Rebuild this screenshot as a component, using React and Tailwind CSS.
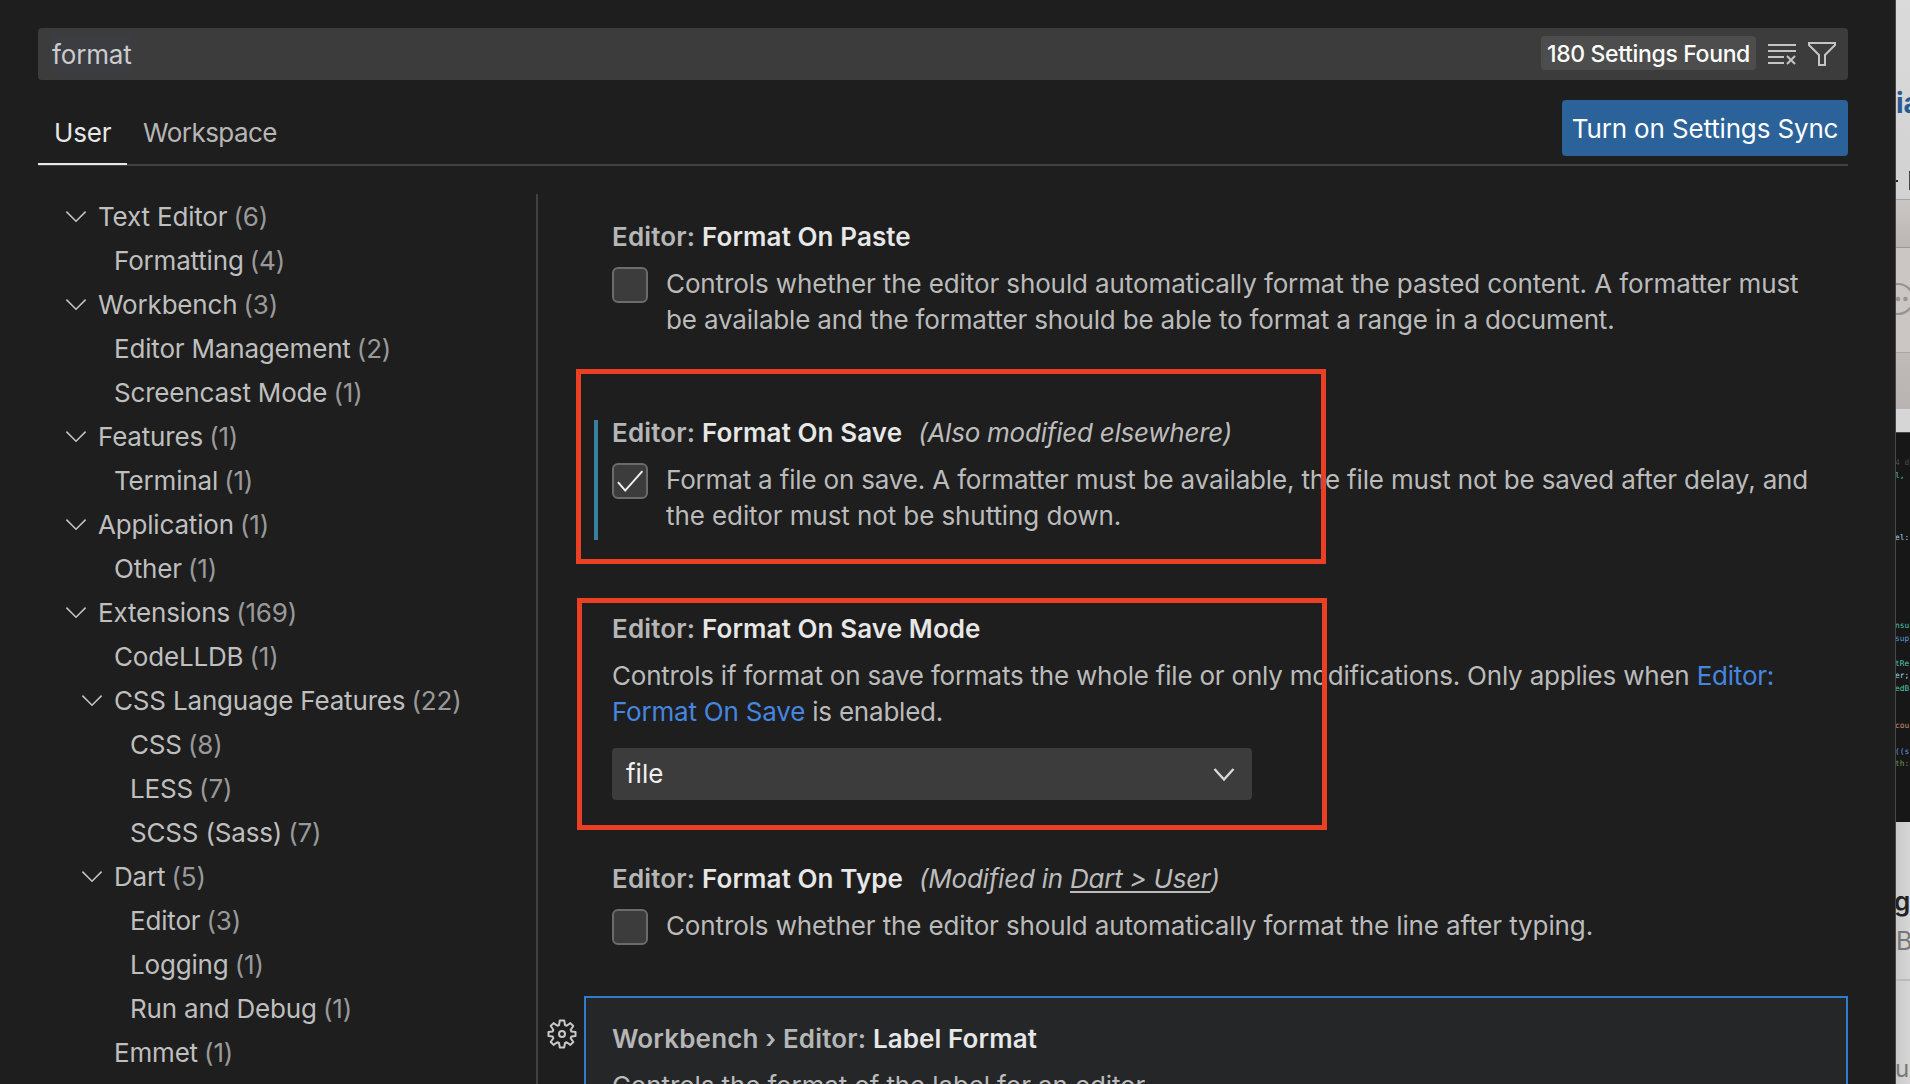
const TREE = [
  { label: "Text Editor", count: 6, depth: 0, open: true },
  { label: "Formatting", count: 4, depth: 1 },
  { label: "Workbench", count: 3, depth: 0, open: true },
  { label: "Editor Management", count: 2, depth: 1 },
  { label: "Screencast Mode", count: 1, depth: 1 },
  { label: "Features", count: 1, depth: 0, open: true },
  { label: "Terminal", count: 1, depth: 1 },
  { label: "Application", count: 1, depth: 0, open: true },
  { label: "Other", count: 1, depth: 1 },
  { label: "Extensions", count: 169, depth: 0, open: true },
  { label: "CodeLLDB", count: 1, depth: 1 },
  { label: "CSS Language Features", count: 22, depth: 1, open: true },
  { label: "CSS", count: 8, depth: 2 },
  { label: "LESS", count: 7, depth: 2 },
  { label: "SCSS (Sass)", count: 7, depth: 2 },
  { label: "Dart", count: 5, depth: 1, open: true },
  { label: "Editor", count: 3, depth: 2 },
  { label: "Logging", count: 1, depth: 2 },
  { label: "Run and Debug", count: 1, depth: 2 },
  { label: "Emmet", count: 1, depth: 1 },
];

const INDENT = ["pl-[28px]", "pl-[44px]", "pl-[60px]"];

const CODE = [
  ["4 d", "text-[#4a4a4a]"],
  ["l,", "text-[#4ec9b0]"],
  null, null, null, null,
  ["el:", "text-[#9cdcfe]"],
  null, null, null, null, null, null,
  ["nsu", "text-[#4ec9b0]"],
  ["sup", "text-[#569cd6]"],
  null,
  ["tRe", "text-[#4ec9b0]"],
  ["er;", "text-[#9cdcfe]"],
  ["edB", "text-[#4ec9b0]"],
  null, null,
  ["cou", "text-[#ce9178]"],
  null,
  ["((s", "text-[#6a9ce0]"],
  ["th:", "text-[#6a9955]"],
];

function Twistie() {
  return (
    <svg className="h-[32px] w-[32px] shrink-0" viewBox="0 0 32 32" fill="none" stroke="#c5c5c5" strokeWidth="1.5">
      <path d="M6.4 10.6 L16 20.2 L25.6 10.6" />
    </svg>
  );
}

function TreeRow({ label, count, depth, open }) {
  return (
    <div className={`flex h-[44px] items-center ${INDENT[depth]}`}>
      <div className="mr-[-1px] flex w-[33px] shrink-0 -translate-x-[6px]">{open && <Twistie />}</div>
      <span className="whitespace-pre tracking-[-0.18px] text-[#bfbfbf]">
        {label}
        <span className="-ml-px text-[#999999]"> ({count})</span>
      </span>
    </div>
  );
}

function Heading({ category, name, children }) {
  return (
    <h3 className="whitespace-pre leading-[36px]">
      <span className="font-semibold tracking-[0.16px] text-[#b6b6b6]">{category} </span>
      <span className="font-semibold tracking-[0.09px] text-[#e7e7e7]">{name}</span>
      {children}
    </h3>
  );
}

function Note({ children }) {
  return <span className="ml-4 italic tracking-[-0.24px] text-[#bcbcbc]">{children}</span>;
}

function Checkbox({ checked }) {
  return (
    <div className="mt-px h-[36px] w-[36px] shrink-0 rounded-[6px] border-2 border-[#6b6b6b] bg-[#3c3c3c]">
      {checked && (
        <svg className="h-[32px] w-[32px]" viewBox="0 0 32 32" fill="none" stroke="#f0f0f0" strokeWidth="2">
          <path d="M4 17.2 L11.2 25.6 L28.4 6.2" />
        </svg>
      )}
    </div>
  );
}

function CheckSetting({ checked, children }) {
  return (
    <div className="mt-[11px] flex">
      <Checkbox checked={checked} />
      <p className="ml-[18px] whitespace-nowrap leading-[36px]">{children}</p>
    </div>
  );
}

function ClearIcon() {
  return (
    <svg className="h-[24px] w-[30px]" viewBox="0 0 30 24" fill="none" stroke="#c5c5c5" strokeWidth="2">
      <path d="M1 3H29M1 9H29M1 15H17M1 21H17" />
      <path d="M20 14L28 22M28 14L20 22" />
    </svg>
  );
}

function FilterIcon() {
  return (
    <svg className="h-[26px] w-[30px]" viewBox="0 0 30 26" fill="none" stroke="#c5c5c5" strokeWidth="2">
      <path d="M2 2H28V4L18 14V24H12V14L2 4Z" />
    </svg>
  );
}

function GearIcon() {
  return (
    <svg className="h-[30px] w-[30px]" viewBox="0 0 30 30" fill="none" stroke="#c8c8c8" strokeWidth="2" strokeLinejoin="round">
      <path d="M12.8 1.5h4.4l.8 4.6 1.6.7 3.8-2.7 2.9 2.9-2.6 3.8.7 1.7 4.1.6v3.8l-4.1.6-.7 1.7 2.6 3.8-2.9 2.9-3.8-2.7-1.6.7-.8 4.6h-4.4l-.8-4.6-1.6-.7-3.8 2.7-2.9-2.9 2.6-3.8-.7-1.7-4.1-.6v-3.8l4.1-.6.7-1.7-2.6-3.8 2.9-2.9 3.8 2.7 1.6-.7z" />
      <circle cx="15" cy="15" r="3" />
    </svg>
  );
}

function BackgroundWindow() {
  return (
    <aside className="flex w-[14px] shrink-0 flex-col overflow-hidden bg-[#d6d6d6]">
      <div className="flex h-[199px] shrink-0 flex-col bg-gradient-to-b from-[#dadada] to-[#d2d2d2]">
        <span className="mt-[86px] h-[34px] text-[28px] leading-[34px] font-bold text-[#285a94]">ia</span>
        <div className="mt-[51px] flex h-[19px] items-center justify-between">
          <div className="h-[2px] w-[2px] bg-[#222]" />
          <div className="h-[19px] w-px bg-[#444]" />
        </div>
      </div>
      <div className="h-[48px] shrink-0 border-t border-[#a5a2a0] bg-gradient-to-b from-[#cac6c3] to-[#bbb6b2]" />
      <div className="flex h-[105px] shrink-0 items-center border-t border-[#9c9896] bg-[#cbc6c3]">
        <svg className="h-[34px] w-[14px]" viewBox="0 0 14 34" fill="none">
          <circle cx="2" cy="16" r="15" stroke="#979390" strokeWidth="2.2" />
          <circle cx="2" cy="16" r="2.3" fill="#979390" />
          <circle cx="9.5" cy="16" r="2.3" fill="#979390" />
        </svg>
      </div>
      <div className="h-[57px] shrink-0 border-t border-[#aaa6a4] bg-gradient-to-b from-[#bfbab7] to-[#b9b4b1]" />
      <div className="h-[23px] shrink-0 bg-[#d6d6d6]" />
      <div className="h-[390px] shrink-0 border-t border-[#4a4a4a] bg-[#171717] pt-[24px] font-['DejaVu_Sans_Mono',monospace] text-[7.9px] leading-[12.55px]">
        {CODE.map((line, i) => (
          <div key={i} className={`-ml-px h-[12.55px] whitespace-pre ${line ? line[1] : ""}`}>
            {line ? line[0] : ""}
          </div>
        ))}
      </div>
      <div className="flex grow flex-col bg-gradient-to-r from-[#c9c9c9] to-[#d6d6d6]">
        <span className="-ml-[2px] mt-[62px] h-[36px] text-[26px] leading-[36px] font-semibold text-[#222]">g</span>
        <span className="mt-[4px] h-[34px] text-[25px] leading-[34px] text-[#777]">B</span>
        <div className="mt-[21px] h-[2px] bg-[#bbb]" />
        <span className="mt-[72px] -ml-px h-[32px] text-[24px] leading-[32px] text-[#777]">u</span>
      </div>
    </aside>
  );
}

export default function App() {
  return (
    <div className="flex h-[1084px] w-[1910px] overflow-hidden bg-[#1e1e1e] font-['Inter',sans-serif] text-[26px] leading-[36px] text-[#bbbbbb]">
      <main className="flex w-[1896px] shrink-0 flex-col border-r border-[#4a4a4a] pt-[28px] pl-[38px]">
        <div className="flex h-[52px] w-[1810px] shrink-0 items-center rounded-[4px] bg-[#3c3c3c] pl-[14px]">
          <span className="h-[38px] bg-[#3c3d42] leading-[40px] tracking-[-0.15px] text-[#cccccc]">format</span>
          <div className="ml-auto flex h-[34px] w-[215px] -translate-y-px items-center justify-center rounded-[4px] bg-[#4d4d4d] pt-px text-[23px] font-medium tracking-[-0.35px] whitespace-nowrap text-white">
            180 Settings Found
          </div>
          <div className="ml-[11px] flex items-center gap-[10px] pr-[11px]">
            <ClearIcon />
            <FilterIcon />
          </div>
        </div>

        <div className="flex h-[86px] w-[1810px] shrink-0 border-b-2 border-[#414141]">
          <div className="-mb-px flex h-[85px] w-[89px] items-end border-b-2 border-[#e7e7e7] pb-[12px] pl-[16px] tracking-[-0.2px] text-[#e7e7e7]">
            <span className="h-[36px]">User</span>
          </div>
          <div className="flex h-[85px] items-end pb-[14px] pl-[16px] tracking-[-0.55px] text-[#b6b6b6]">
            <span className="h-[36px]">Workspace</span>
          </div>
          <button className="mt-[20px] ml-auto h-[56px] w-[286px] rounded-[4px] bg-[#2b6299] pt-[2px] tracking-[-0.15px] whitespace-nowrap text-white">
            Turn on Settings Sync
          </button>
        </div>

        <div className="flex grow pt-[28px]">
          <nav className="w-[498px] shrink-0 pt-px">
            {TREE.map((row, i) => (
              <TreeRow key={i} {...row} />
            ))}
          </nav>
          <div className="h-[890px] w-[2px] shrink-0 bg-[#414141]" />

          <section className="flex w-[1310px] shrink-0 flex-col">
            <div className="h-[196px] shrink-0 pt-[25px] pl-[74px]">
              <Heading category="Editor:" name="Format On Paste" />
              <CheckSetting>
                <span className="tracking-[-0.11px]">
                  Controls whether the editor should automatically format the pasted content. A formatter must
                </span>
                <br />
                <span className="tracking-[-0.17px]">
                  be available and the formatter should be able to format a range in a document.
                </span>
              </CheckSetting>
            </div>

            <div className="relative h-[196px] shrink-0 pt-[25px] pl-[74px]">
              <div className="absolute top-[30px] left-[56px] h-[120px] w-[4px] bg-[#3780a0]" />
              <Heading category="Editor:" name="Format On Save">
                <Note>(Also modified elsewhere)</Note>
              </Heading>
              <CheckSetting checked>
                <span className="tracking-[-0.17px]">
                  Format a file on save. A formatter must be available, the file must not be saved after delay, and
                </span>
                <br />
                <span className="tracking-[-0.09px]">the editor must not be shutting down.</span>
              </CheckSetting>
              <div className="absolute top-[-21px] left-[38px] h-[195px] w-[750px] border-[5px] border-[#ec4024]" />
            </div>

            <div className="relative h-[250px] shrink-0 pt-[25px] pl-[74px]">
              <Heading category="Editor:" name="Format On Save Mode" />
              <p className="mt-[11px] whitespace-nowrap tracking-[-0.21px]">
                Controls if format on save formats the whole file or only modifications. Only applies when{" "}
                <span className="text-[#4586e0]">
                  Editor:
                  <br />
                  Format On Save
                </span>{" "}
                is enabled.
              </p>
              <div className="mt-[18px] flex h-[52px] w-[640px] items-center justify-between rounded-[4px] bg-[#3c3c3c] pr-[16px] pl-[14px] text-[#f0f0f0]">
                file
                <svg className="h-[24px] w-[24px]" viewBox="0 0 24 24" fill="none" stroke="#d8d8d8" strokeWidth="2.4">
                  <path d="M2.5 7 L12 17.5 L21.5 7" />
                </svg>
              </div>
              <div className="absolute top-[12px] left-[39px] h-[232px] w-[750px] border-[5px] border-[#ec4024]" />
            </div>

            <div className="h-[160px] shrink-0 pt-[25px] pl-[74px]">
              <Heading category="Editor:" name="Format On Type">
                <Note>
                  (Modified in <span className="underline decoration-2 underline-offset-[3px]">Dart &gt; User</span>)
                </Note>
              </Heading>
              <CheckSetting>
                <span className="tracking-[-0.12px]">
                  Controls whether the editor should automatically format the line after typing.
                </span>
              </CheckSetting>
            </div>

            <div className="flex h-[88px] shrink-0 overflow-hidden">
              <div className="w-[46px] shrink-0 pt-[23px] pl-[9px]">
                <GearIcon />
              </div>
              <div className="h-[200px] w-[1264px] shrink-0 border-2 border-[#2f7bd0] bg-[#252628] pt-[23px] pl-[26px]">
                <Heading category="Workbench › Editor:" name="Label Format" />
                <p className="mt-[11px] whitespace-nowrap tracking-[-0.13px]">Controls the format of the label for an editor.</p>
              </div>
            </div>
          </section>
        </div>
      </main>
      <BackgroundWindow />
    </div>
  );
}
